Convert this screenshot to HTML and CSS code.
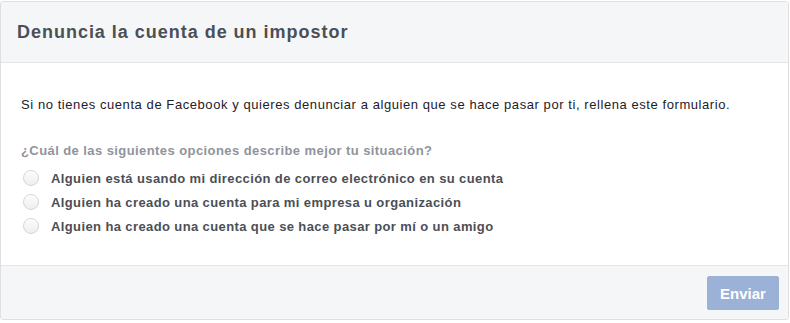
FILE: index.html
```html
<!DOCTYPE html>
<html lang="es">
<head>
<meta charset="utf-8">
<link rel="stylesheet" href="styles.css">
</head>
<body>
<div class="card">
  <div class="header"><h2 class="title">Denuncia la cuenta de un impostor</h2></div>
  <div class="content">
    <p class="intro">Si no tienes cuenta de Facebook y quieres denunciar a alguien que se hace pasar por ti, rellena este formulario.</p>
    <div class="question">¿Cuál de las siguientes opciones describe mejor tu situación?</div>
    <ul class="options">
      <li class="option"><span class="radio"></span><span>Alguien está usando mi dirección de correo electrónico en su cuenta</span></li>
      <li class="option"><span class="radio"></span><span>Alguien ha creado una cuenta para mi empresa u organización</span></li>
      <li class="option"><span class="radio"></span><span>Alguien ha creado una cuenta que se hace pasar por mí o un amigo</span></li>
    </ul>
  </div>
  <div class="footer"><button class="send" type="button">Enviar</button></div>
</div>
</body>
</html>
```
FILE: styles.css
```css
html, body { margin: 0; padding: 0; background: #fff; }
body { font-family: "Liberation Sans", Arial, Helvetica, sans-serif; font-size: 13px; padding-top: 1px; }
.card {
  width: 787px;
  border: 1px solid #dddfe2;
  border-radius: 3px;
  background: #fff;
}
.header {
  background: #f5f6f7;
  height: 60px;
  border-bottom: 1px solid #e5e5e5;
  display: flex;
  align-items: center;
  padding: 0 16px;
  border-radius: 3px 3px 0 0;
}
.title { margin: 0; font-size: 18px; font-weight: bold; color: #4b4f56; line-height: 22px; letter-spacing: 0.98px; }
.content { padding: 34px 20px 27px; }
.intro { margin: 0; color: #1d2129; line-height: 16px; letter-spacing: 0.57px; }
.question { margin-top: 30px; color: #90949c; font-weight: bold; line-height: 16px; letter-spacing: 0.42px; }
.options { list-style: none; margin: 7px 0 0; padding: 0; }
.option {
  display: flex;
  align-items: center;
  height: 24px;
  color: #4b4f56;
  font-weight: bold;
  letter-spacing: 0.39px;
}
.radio {
  width: 14px;
  height: 14px;
  border-radius: 50%;
  border: 1px solid #d3d6db;
  background: linear-gradient(#fdfdfd, #eceef0);
  box-shadow: inset 0 1px 1px rgba(255,255,255,0.8);
  margin: 0 12px 0 2px;
  flex: none;
}
.footer {
  background: #f5f6f7;
  border-top: 1px solid #e5e5e5;
  display: flex;
  justify-content: flex-end;
  padding: 10px 9px 9px;
  border-radius: 0 0 3px 3px;
}
.send {
  width: 72px;
  height: 34px;
  background: #9cb1d6;
  border: 1px solid #9cb1d6;
  border-radius: 2px;
  color: #fff;
  font-family: "Liberation Sans", Arial, sans-serif;
  font-size: 15px;
  font-weight: bold;
  padding: 0;
}
```
